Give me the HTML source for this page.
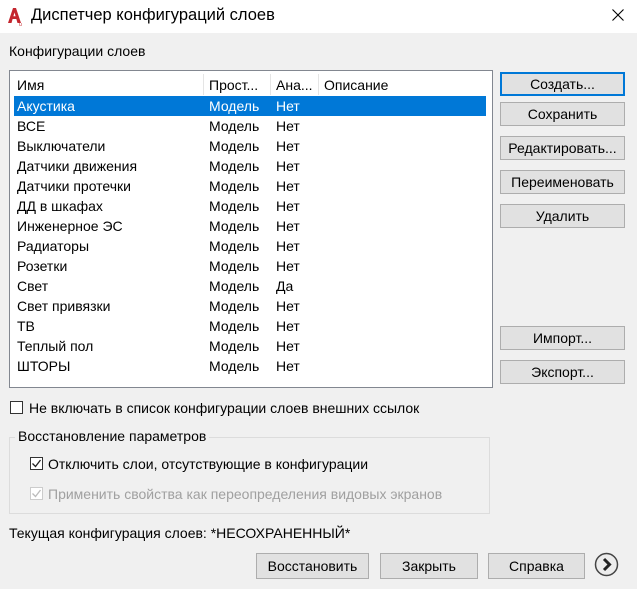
<!DOCTYPE html>
<html><head><meta charset="utf-8"><style>
*{box-sizing:border-box;margin:0;padding:0}
body{width:637px;height:589px;background:#f0f0f0;font-family:"Liberation Sans",sans-serif;font-size:14px;color:#000;position:relative;overflow:hidden}
.a{position:absolute;white-space:nowrap}
.title{position:absolute;left:0;top:0;width:637px;height:33px;background:#fff}
.btn{position:absolute;background:#e1e1e1;border:1px solid #adadad;text-align:center;font-size:14px;line-height:23px}
.list{position:absolute;left:9px;top:70px;width:484px;height:318px;background:#fff;border:1px solid #828790}
.row{position:absolute;left:4px;width:472px;height:20px;line-height:20px}
.row span{position:absolute}
.cb{position:absolute;width:13px;height:13px;border:1px solid #333;background:#fff}
</style></head><body>
<div class="title"></div>
<svg class="a" style="left:7px;top:6px" width="16" height="20" viewBox="0 0 16 20"><path d="M1 17 L6 2 L9 2 L14 17 L10.5 17 L9.3 13 L5.6 13 L4.5 17 Z M6.4 10.3 L8.6 10.3 L7.5 6.5 Z" fill="#c4262e"/><text x="12" y="20" font-size="5" fill="#c4262e" font-family="Liberation Sans">u</text></svg>
<div class="a" style="left:31px;top:6px;font-size:16.5px">Диспетчер конфигураций слоев</div>
<svg class="a" style="left:612px;top:9px" width="12" height="12"><path d="M0.5 0.5 L11.5 11.5 M11.5 0.5 L0.5 11.5" stroke="#000" stroke-width="1.1"/></svg>
<div class="a" style="left:9px;top:43px">Конфигурации слоев</div>
<div class="list">
 <div class="row" style="top:3px;height:22px;line-height:22px"><span style="left:3px">Имя</span><span style="left:195px">Прост...</span><span style="left:262px">Ана...</span><span style="left:310px">Описание</span></div>
 <div class="a" style="left:193px;top:3px;width:1px;height:21px;background:#e5e5e5"></div>
 <div class="a" style="left:260px;top:3px;width:1px;height:21px;background:#e5e5e5"></div>
 <div class="a" style="left:308px;top:3px;width:1px;height:21px;background:#e5e5e5"></div>
 <div class="row" style="top:25px;background:#0078d7;color:#fff"><span style="left:3px">Акустика</span><span style="left:195px">Модель</span><span style="left:262px">Нет</span></div>
 <div class="row" style="top:45px"><span style="left:3px">ВСЕ</span><span style="left:195px">Модель</span><span style="left:262px">Нет</span></div>
 <div class="row" style="top:65px"><span style="left:3px">Выключатели</span><span style="left:195px">Модель</span><span style="left:262px">Нет</span></div>
 <div class="row" style="top:85px"><span style="left:3px">Датчики движения</span><span style="left:195px">Модель</span><span style="left:262px">Нет</span></div>
 <div class="row" style="top:105px"><span style="left:3px">Датчики протечки</span><span style="left:195px">Модель</span><span style="left:262px">Нет</span></div>
 <div class="row" style="top:125px"><span style="left:3px">ДД в шкафах</span><span style="left:195px">Модель</span><span style="left:262px">Нет</span></div>
 <div class="row" style="top:145px"><span style="left:3px">Инженерное ЭС</span><span style="left:195px">Модель</span><span style="left:262px">Нет</span></div>
 <div class="row" style="top:165px"><span style="left:3px">Радиаторы</span><span style="left:195px">Модель</span><span style="left:262px">Нет</span></div>
 <div class="row" style="top:185px"><span style="left:3px">Розетки</span><span style="left:195px">Модель</span><span style="left:262px">Нет</span></div>
 <div class="row" style="top:205px"><span style="left:3px">Свет</span><span style="left:195px">Модель</span><span style="left:262px">Да</span></div>
 <div class="row" style="top:225px"><span style="left:3px">Свет привязки</span><span style="left:195px">Модель</span><span style="left:262px">Нет</span></div>
 <div class="row" style="top:245px"><span style="left:3px">ТВ</span><span style="left:195px">Модель</span><span style="left:262px">Нет</span></div>
 <div class="row" style="top:265px"><span style="left:3px">Теплый пол</span><span style="left:195px">Модель</span><span style="left:262px">Нет</span></div>
 <div class="row" style="top:285px"><span style="left:3px">ШТОРЫ</span><span style="left:195px">Модель</span><span style="left:262px">Нет</span></div>
</div>
<div class="btn" style="left:500px;top:72px;width:125px;height:24px;border:2px solid #0078d7;line-height:20px">Создать...</div>
<div class="btn" style="left:500px;top:102px;width:125px;height:24px">Сохранить</div>
<div class="btn" style="left:500px;top:136px;width:125px;height:24px">Редактировать...</div>
<div class="btn" style="left:500px;top:170px;width:125px;height:24px">Переименовать</div>
<div class="btn" style="left:500px;top:204px;width:125px;height:24px">Удалить</div>
<div class="btn" style="left:500px;top:326px;width:125px;height:24px">Импорт...</div>
<div class="btn" style="left:500px;top:360px;width:125px;height:24px">Экспорт...</div>
<div class="cb" style="left:10px;top:401px"></div>
<div class="a" style="left:29px;top:400px">Не включать в список конфигурации слоев внешних ссылок</div>
<div class="a" style="left:9px;top:437px;width:481px;height:77px;border:1px solid #dcdcdc"></div>
<div class="a" style="left:15px;top:428px;background:#f0f0f0;padding:0 3px">Восстановление параметров</div>
<div class="cb" style="left:30px;top:457px"></div>
<svg class="a" style="left:31px;top:458px" width="11" height="11"><path d="M1.5 5.5 L4.5 8.5 L9.5 2" stroke="#222" stroke-width="1.3" fill="none"/></svg>
<div class="a" style="left:48px;top:456px">Отключить слои, отсутствующие в конфигурации</div>
<div class="cb" style="left:30px;top:487px;border-color:#ccc"></div>
<svg class="a" style="left:31px;top:488px" width="11" height="11"><path d="M1.5 5.5 L4.5 8.5 L9.5 2" stroke="#bbb" stroke-width="1.3" fill="none"/></svg>
<div class="a" style="left:48px;top:486px;color:#a0a0a0">Применить свойства как переопределения видовых экранов</div>
<div class="a" style="left:9px;top:525px">Текущая конфигурация слоев: *НЕСОХРАНЕННЫЙ*</div>
<div class="btn" style="left:256px;top:553px;width:113px;height:26px;line-height:24px">Восстановить</div>
<div class="btn" style="left:380px;top:553px;width:98px;height:26px;line-height:24px">Закрыть</div>
<div class="btn" style="left:488px;top:553px;width:97px;height:26px;line-height:24px">Справка</div>
<svg class="a" style="left:594px;top:552px" width="25" height="25"><circle cx="12.5" cy="12.5" r="11" fill="#ececec" stroke="#444" stroke-width="1.5"/><path d="M10 7 L15.5 12.5 L10 18" stroke="#222" stroke-width="3" fill="none"/></svg>
</body></html>
